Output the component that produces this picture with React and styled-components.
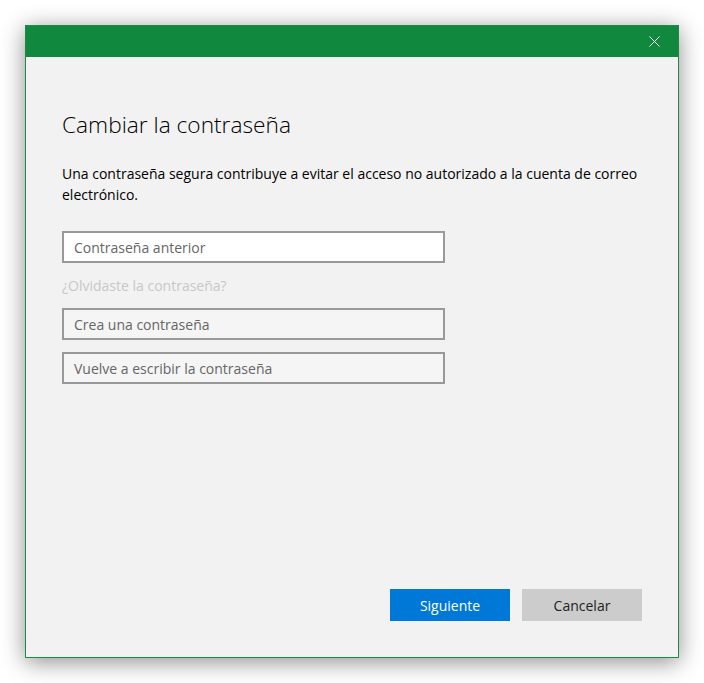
import React from 'react';
import styled, { createGlobalStyle } from 'styled-components';

const Global = createGlobalStyle`
  html, body {
    margin: 0;
    background: #ffffff;
    font-family: "Open Sans", "Noto Sans", sans-serif;
  }
`;

const Page = styled.div`
  padding: 25px 25px 26px 25px;
`;

const Window = styled.div`
  width: 652px;
  height: 631px;
  border: 1px solid #1e8a48;
  background: #f2f2f2;
  display: flex;
  flex-direction: column;
  box-shadow: 0 4px 22px rgba(0, 0, 0, 0.45);
`;

const TitleBar = styled.div`
  height: 31px;
  background: #10893e;
  display: flex;
  justify-content: flex-end;
  align-items: center;
  padding-right: 18px;
`;

const Body = styled.div`
  flex: 1;
  display: flex;
  flex-direction: column;
  padding: 53px 36px 36px 36px;
`;

const Title = styled.h1`
  margin: 0;
  font-size: 22.7px;
  font-weight: 300;
  color: #000;
  line-height: 30px;
`;

const Text = styled.p`
  margin: 23px 0 0;
  font-size: 14px;
  line-height: 21px;
  color: #000;
`;

const Field = styled.div`
  width: 383px;
  height: 32px;
  box-sizing: border-box;
  border: 2px solid #999;
  background: ${p => (p.$active ? '#fff' : '#f5f5f5')};
  display: flex;
  align-items: center;
  padding-left: 10px;
  margin-top: ${p => p.$top}px;
  font-size: 14px;
  color: #666;
`;

const Link = styled.div`
  margin-top: 13px;
  font-size: 14px;
  color: #c8c8c8;
  line-height: 20px;
`;

const Actions = styled.div`
  margin-top: auto;
  display: flex;
  justify-content: flex-end;
  gap: 12px;
`;

const Button = styled.div`
  width: 120px;
  height: 32px;
  display: flex;
  align-items: center;
  justify-content: center;
  font-size: 14px;
  background: ${p => (p.$primary ? '#0078d7' : '#cccccc')};
  color: ${p => (p.$primary ? '#fff' : '#222')};
`;

const Close = () => (
  <svg width="11" height="11" viewBox="0 0 11 11">
    <path d="M0.5 0.5 L10.5 10.5 M10.5 0.5 L0.5 10.5" stroke="#fff" strokeWidth="1" />
  </svg>
);

export default function App() {
  return (
    <Page>
      <Global />
      <Window>
        <TitleBar>
          <Close />
        </TitleBar>
        <Body>
          <Title>Cambiar la contraseña</Title>
          <Text>
            Una contraseña segura contribuye a evitar el acceso no autorizado a la cuenta de correo
            electrónico.
          </Text>
          <Field $active $top={26}>Contraseña anterior</Field>
          <Link>¿Olvidaste la contraseña?</Link>
          <Field $top={12}>Crea una contraseña</Field>
          <Field $top={12}>Vuelve a escribir la contraseña</Field>
          <Actions>
            <Button $primary>Siguiente</Button>
            <Button>Cancelar</Button>
          </Actions>
        </Body>
      </Window>
    </Page>
  );
}
